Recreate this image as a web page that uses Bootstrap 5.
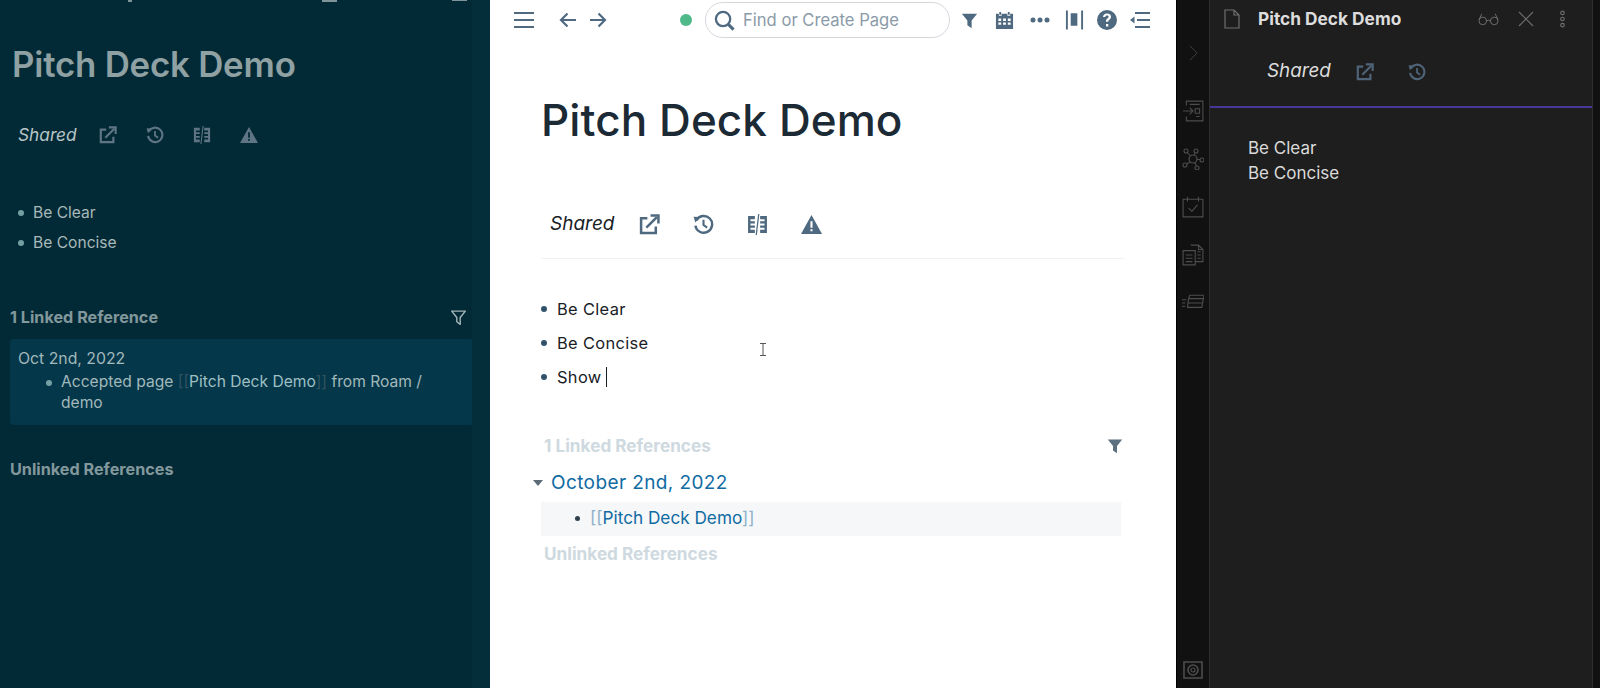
<!DOCTYPE html>
<html lang="en">
<head>
    <meta charset="UTF-8">
    <meta name="viewport" content="width=device-width, initial-scale=1.0">
    <title>Pitch Deck Demo</title>
    <link rel="stylesheet" href="https://cdn.jsdelivr.net/npm/bootstrap@5.3.0/dist/css/bootstrap.min.css">
    <style>
        html, body { height: 100%; overflow: hidden; }
        body { font-family: Inter, "Liberation Sans", sans-serif; background: #fff; }
        .shell { height: 688px; width: 1600px; }
        .ic { display: block; flex: none; }

        /* left solarized graph */
        .pane-left { width: 490px; background: #022a36; color: #a9b8b9; position: relative; padding: 0 16px 0 10px; }
        .pane-left::after { content: ""; position: absolute; top: 0; right: 0; bottom: 0; width: 18px; background: #032e3a; }
        .top-crumbs { height: 3px; margin-left: 118px; gap: 186px; }
        .top-crumbs i { display: block; height: 2px; width: 15px; background: #7f9498; }
        .top-crumbs i:first-child { width: 4px; margin-right: 4px; }
        .top-crumbs i:last-child { height: 1px; margin-left: -71px; }
        .title-left { font-size: 34.8px; font-weight: 600; letter-spacing: -.2px; color: #8fa1a3; margin: 42px 0 0 2px; line-height: 38px; }
        .shared-left { margin: 39px 0 0 8px; height: 26px; color: #b9c6c6; }
        .shared-left em { font-size: 17.3px; width: 81px; }
        .shared-left .ic { color: #5f7484; margin-right: 29px; }
        .list-left { list-style: none; margin: 50px 0 0 0; padding: 0 0 0 23px; font-size: 15.6px; line-height: 30px; color: #a9b8b9; }
        .list-left li { position: relative; }
        .list-left li::before, .ref-line::before { content: ""; position: absolute; left: -15px; top: 12px; width: 6px; height: 6px; border-radius: 50%; background: #74a0a3; }
        .head-left { font-size: 16.2px; font-weight: 700; color: #82989c; line-height: 22px; }
        .head-left.first { margin-top: 48px; padding-right: 7px; }
        .head-left.last { margin-top: 33px; }
        .ref-box { background: #04374a; border-radius: 4px; margin-top: 11px; height: 86px; padding: 9px 8px; font-size: 15.8px; line-height: 22px; color: #a2b9bb; }
        .ref-line { position: relative; margin: 2px 20px 0 43px; line-height: 20.5px; font-size: 15.6px; }
        .ref-line::before { top: 8px; }
        .ref-line b { font-weight: 400; color: #9fc0c4; }
        .ref-line s { text-decoration: none; color: #30535f; }

        /* center graph */
        .pane-main { width: 686px; background: #fff; color: #182026; }
        .tool-row { height: 40px; padding-left: 24px; color: #51687d; }
        .tool-row .ic { color: #4f6a80; }
        .dot-live { width: 12px; height: 12px; border-radius: 50%; background: #4fb98a; margin: 0 13px 0 0; }
        .find-box { width: 245px; height: 36px; border: 1px solid #d3d8dd; border-radius: 18px; color: #8a9ba8; font-size: 16.6px; padding-left: 8px; margin-right: 11px; }
        .doc { padding: 0 52px 0 51px; }
        .title-main { font-size: 44px; font-weight: 500; color: #1c2a35; line-height: 52px; margin: 54px 0 0 0; letter-spacing: .1px; }
        .shared-main { margin-top: 61px; height: 52px; padding: 0 0 17px 9px; border-bottom: 1px solid #f0f2f4; color: #182026; }
        .shared-main em { font-size: 19px; width: 89px; }
        .shared-main .ic { color: #4f6a80; margin-right: 33px; }
        .list-main { list-style: none; margin: 33px 0 0 0; padding: 0 0 0 16px; font-size: 16.4px; line-height: 34px; letter-spacing: .35px; position: relative; }
        .list-main li { position: relative; }
        .list-main li::before { content: ""; position: absolute; left: -16px; top: 14px; width: 6px; height: 6px; border-radius: 50%; background: #30536b; }
        .caret-text { border-right: 1px solid #182026; padding-right: 4px; }
        .head-main { font-size: 17.2px; font-weight: 700; color: #ced9e0; line-height: 22px; padding-left: 3px; }
        .head-main.first { margin-top: 41px; padding-right: 1px; }
        .date-row { font-size: 19px; color: #106ba3; margin: 14px 0 0 -8px; line-height: 24px; letter-spacing: .4px; }
        .date-row span.tri { width: 0; height: 0; border: 5px solid transparent; border-top: 6px solid #5c6b76; border-bottom: 0; margin-right: 8px; }
        .ref-main { background: #f6f7f8; height: 34px; margin-top: 7px; padding-left: 49px; font-size: 17.2px; line-height: 32px; color: #106ba3; position: relative; margin-right: 3px; }
        .ref-main::before { content: ""; position: absolute; left: 34px; top: 14px; width: 5px; height: 5px; border-radius: 50%; background: #30404d; }
        .ref-main s { text-decoration: none; color: #8fb0c8; }
        .head-main.last { margin-top: 7px; }

        /* dark side */
        .rail { width: 34px; background: #111112; border-left: 1px solid #000; border-right: 1px solid #2e2e2e; color: #4d4d4d; }
        .rail .tool { margin-bottom: 26px; }
        .chev { margin-top: 44px; margin-bottom: 38px; color: #3f3f3f; }
        .side { width: 382px; background: #1e1e1e; color: #dcdcdc; }
        .side-head { height: 37px; margin-bottom: 2px; padding-left: 14px; color: #6f6f6f; }
        .side-head strong { font-size: 17.3px; font-weight: 700; color: #dddddd; margin-left: 18px; width: 220px; }
        .side-shared { height: 69px; padding: 0 0 2px 57px; border-bottom: 2px solid #46379a; }
        .side-shared em { font-size: 18.8px; width: 89px; color: #dddddd; }
        .side-shared .ic { color: #4f6479; margin-right: 34px; }
        .side-text { padding: 28px 0 0 38px; font-size: 17px; line-height: 24.5px; color: #dadada; }
        .edge { width: 8px; background: #111112; border-left: 1px solid #2e2e2e; }
    </style>
</head>
<body>
    <svg width="0" height="0" class="position-absolute">
        <symbol id="i-share" viewBox="0 0 20 20"><path d="M8 4H2v14h14v-6" fill="none" stroke="currentColor" stroke-width="2.4"/><path d="M7 13 L17 3" stroke="currentColor" stroke-width="2.4" fill="none"/><path d="M11 1.500h7.500V9" fill="none" stroke="currentColor" stroke-width="2.4"/></symbol>
        <symbol id="i-history" viewBox="0 0 20 20"><path d="M3.200 6a8 8 0 1 1-.9 5" fill="none" stroke="currentColor" stroke-width="2.3"/><path d="M.6 2.500 L6.500 2.800 L2.200 8Z" fill="currentColor"/><path d="M10 5.500V10.500l3.500 2.500" fill="none" stroke="currentColor" stroke-width="2"/></symbol>
        <symbol id="i-diff" viewBox="0 0 20 20"><path fill-rule="evenodd" d="M1 2h6.500v16H1zM3.300 5v2h4.200V5zM3.300 9v2h4.200V9zM3.300 13v2h4.200v-2zM12.500 2H19v16h-6.500zM12.500 5v2h4.200V5zM12.500 9v2h4.200V9zM12.500 13v2h4.200v-2z" fill="currentColor"/><path d="M11.200 0 L8.800 20" stroke="currentColor" stroke-width="1.200"/></symbol>
        <symbol id="i-warn" viewBox="0 0 20 20"><path fill-rule="evenodd" d="M10 1 L20 19 H0Z M9 7v6h2V7z M9 14.500v2h2v-2z" fill="currentColor"/></symbol>
        <symbol id="i-menu" viewBox="0 0 20 20"><path d="M0 3h20M0 10h20M0 17h20" stroke="currentColor" stroke-width="2" fill="none"/></symbol>
        <symbol id="i-left" viewBox="0 0 20 20"><path d="M18 10H3M9.500 3.500 3 10l6.500 6.500" stroke="currentColor" stroke-width="2.200" fill="none"/></symbol>
        <symbol id="i-right" viewBox="0 0 20 20"><path d="M2 10h15M10.500 3.500 17 10l-6.500 6.500" stroke="currentColor" stroke-width="2.200" fill="none"/></symbol>
        <symbol id="i-search" viewBox="0 0 22 22"><circle cx="9.500" cy="9.500" r="7.500" fill="none" stroke="currentColor" stroke-width="2.400"/><path d="M15 15l5.500 5.500" stroke="currentColor" stroke-width="3.200"/></symbol>
        <symbol id="i-filter" viewBox="0 0 20 20"><path d="M1 2h18l-6.500 8v9l-5-3.500V10z" fill="currentColor"/></symbol>
        <symbol id="i-filter-line" viewBox="0 0 20 20"><path d="M2 2.500h16l-6 7.500v8l-4-3v-5z" fill="none" stroke="currentColor" stroke-width="1.700" stroke-linejoin="round"/></symbol>
        <symbol id="i-cal" viewBox="0 0 20 20"><path fill-rule="evenodd" d="M1 3h3v2h3V3h6v2h3V3h3v16H1zM3.500 8v2.500h3V8zm5 0v2.500h3V8zm5 0v2.500h3V8zm-10 4v2.500h3V12zm5 0v2.500h3V12zm5 0v2.500h3V12z" fill="currentColor"/><path d="M5.500 1v3M14.500 1v3" stroke="currentColor" stroke-width="2"/></symbol>
        <symbol id="i-dots" viewBox="0 0 20 20"><circle cx="3" cy="10" r="2.500" fill="currentColor"/><circle cx="10" cy="10" r="2.500" fill="currentColor"/><circle cx="17" cy="10" r="2.500" fill="currentColor"/></symbol>
        <symbol id="i-panels" viewBox="0 0 20 20"><path d="M1 0h2v20H1zM17 0h2v20h-2zM6 3h7v13H6z" fill="currentColor"/></symbol>
        <symbol id="i-help" viewBox="0 0 20 20"><path fill-rule="evenodd" d="M10 0a10 10 0 1 1 0 20a10 10 0 0 1 0-20zM9 14v2.500h2.300V14zM10 3.500c-2.300 0-3.800 1.300-4 3.500h2.300c.1-1 .7-1.500 1.700-1.500s1.600.5 1.600 1.300c0 .8-.5 1.200-1.300 1.800-1 .8-1.300 1.500-1.300 3.200h2.300c0-1 .2-1.400 1-2 1-.7 1.700-1.500 1.700-3 0-2.200-1.700-3.300-4-3.300z" fill="currentColor"/></symbol>
        <symbol id="i-outdent" viewBox="0 0 20 20"><path d="M5 3h15M7 10h13M5 17h15" stroke="currentColor" stroke-width="2.200" fill="none"/><path d="M0 10l4.500-3.500v7z" fill="currentColor"/></symbol>
        <symbol id="i-doc" viewBox="0 0 16 20"><path d="M1 1h9l5 5v13H1zM10 1v5h5" fill="none" stroke="currentColor" stroke-width="1.200"/></symbol>
        <symbol id="i-glasses" viewBox="0 0 22 14"><circle cx="5" cy="9" r="4" fill="none" stroke="currentColor" stroke-width="1"/><circle cx="17" cy="9" r="4" fill="none" stroke="currentColor" stroke-width="1"/><path d="M9 9q2-1.500 4 0M1 8 4 1.500M21 8 18 1.500" fill="none" stroke="currentColor" stroke-width="1"/></symbol>
        <symbol id="i-x" viewBox="0 0 16 16"><path d="M1 1l14 14M15 1 1 15" stroke="currentColor" stroke-width="1.100"/></symbol>
        <symbol id="i-kebab" viewBox="0 0 8 20"><circle cx="4" cy="3" r="2" fill="none" stroke="currentColor" stroke-width="1.300"/><circle cx="4" cy="10" r="2" fill="none" stroke="currentColor" stroke-width="1.300"/><circle cx="4" cy="17" r="2" fill="none" stroke="currentColor" stroke-width="1.300"/></symbol>
        <symbol id="i-chev" viewBox="0 0 10 18"><path d="M1 1l8 8-8 8" fill="none" stroke="currentColor" stroke-width="1.100"/></symbol>
        <symbol id="i-note" viewBox="0 0 20 20"><path d="M4 5V1h15v18H4v-4M1 10h9M7 7l3 3-3 3M12 8h4v4h-4zM7 4h9M13 15h3" fill="none" stroke="currentColor" stroke-width="1"/></symbol>
        <symbol id="i-graph" viewBox="0 0 22 22"><circle cx="11" cy="11" r="4" fill="none" stroke="currentColor" stroke-width="1.200"/><g fill="none" stroke="currentColor" stroke-width="1.100"><circle cx="4" cy="3" r="2"/><circle cx="14" cy="3" r="2"/><circle cx="20" cy="12" r="2"/><circle cx="15" cy="20" r="2"/><circle cx="3" cy="17" r="2"/><path d="M5.500 4.500 8.500 8M13.300 5 12 7.200M15 11.500h3M13 14.500l1.300 3.500M8 14l-3.500 2"/></g></symbol>
        <symbol id="i-check" viewBox="0 0 20 20"><path d="M1 3h18v16H1zM5 1v4M15 1v4M6 11l3 3 5-6" fill="none" stroke="currentColor" stroke-width="1"/></symbol>
        <symbol id="i-pages" viewBox="0 0 20 20"><path d="M8 1h7l4 4v11h-7M1 6h11v13H1zM3.500 10h6M3.500 13h6M3.500 16h6M14 7h3M14 10h3M14 13h3M15 1v4h4" fill="none" stroke="currentColor" stroke-width="1"/></symbol>
        <symbol id="i-cards" viewBox="0 0 20 20"><path d="M6 6 7 3h13l-2 11H5zM6 6h13M5 10h13M0 7h4M0 10h3M0 13h3" fill="none" stroke="currentColor" stroke-width="1"/></symbol>
        <symbol id="i-camera" viewBox="0 0 20 20"><path d="M1 2h18v16H1z" fill="none" stroke="currentColor" stroke-width="1.600"/><circle cx="10" cy="10" r="5" fill="none" stroke="currentColor" stroke-width="1.600"/><circle cx="10" cy="10" r="2" fill="none" stroke="currentColor" stroke-width="1.200"/></symbol>
    </svg>

    <div class="shell d-flex">
        <section class="pane-left flex-shrink-0">
            <div class="top-crumbs d-flex" aria-hidden="true"><i></i><i></i><i></i></div>
            <div class="title-left">Pitch Deck Demo</div>
            <div class="shared-left d-flex align-items-center">
                <em>Shared</em>
                <svg class="ic" width="18" height="18"><use href="#i-share"/></svg>
                <svg class="ic" width="18" height="18"><use href="#i-history"/></svg>
                <svg class="ic" width="18" height="18"><use href="#i-diff"/></svg>
                <svg class="ic" width="18" height="18"><use href="#i-warn"/></svg>
            </div>
            <ul class="list-left">
                <li>Be Clear</li>
                <li>Be Concise</li>
            </ul>
            <div class="head-left first d-flex justify-content-between align-items-center">
                <span>1 Linked Reference</span>
                <svg class="ic" width="17" height="17" style="color:#a3b4b6"><use href="#i-filter-line"/></svg>
            </div>
            <div class="ref-box">
                <div>Oct 2nd, 2022</div>
                <div class="ref-line"><span>Accepted page </span><s>[[</s><b>Pitch Deck Demo</b><s>]]</s><span> from Roam /</span><br><span>demo</span></div>
            </div>
            <div class="head-left last">Unlinked References</div>
        </section>

        <main class="pane-main flex-shrink-0">
            <div class="tool-row d-flex align-items-center">
                <svg class="ic me-4" width="20" height="20"><use href="#i-menu"/></svg>
                <svg class="ic" width="20" height="20"><use href="#i-left"/></svg>
                <svg class="ic" width="20" height="20" style="margin:0 72px 0 10px"><use href="#i-right"/></svg>
                <span class="dot-live"></span>
                <div class="find-box d-flex align-items-center gap-2">
                    <svg class="ic" width="21" height="21"><use href="#i-search"/></svg>
                    <span>Find or Create Page</span>
                </div>
                <svg class="ic" width="17" height="17" style="margin:0 17px 0 0"><use href="#i-filter"/></svg>
                <svg class="ic" width="19" height="19" style="margin:0 16px 0 0"><use href="#i-cal"/></svg>
                <svg class="ic" width="20" height="20" style="margin:0 15px 0 0"><use href="#i-dots"/></svg>
                <svg class="ic" width="19" height="20" style="margin:0 13px 0 0"><use href="#i-panels"/></svg>
                <svg class="ic" width="20" height="20" style="margin:0 13px 0 0"><use href="#i-help"/></svg>
                <svg class="ic" width="20" height="20"><use href="#i-outdent"/></svg>
            </div>
            <div class="doc">
                <div class="title-main">Pitch Deck Demo</div>
                <div class="shared-main d-flex align-items-center">
                    <em>Shared</em>
                    <svg class="ic" width="21" height="21"><use href="#i-share"/></svg>
                    <svg class="ic" width="21" height="21"><use href="#i-history"/></svg>
                    <svg class="ic" width="21" height="21"><use href="#i-diff"/></svg>
                    <svg class="ic" width="21" height="21"><use href="#i-warn"/></svg>
                </div>
                <ul class="list-main">
                    <li>Be Clear</li>
                    <li>Be Concise</li>
                    <li><span class="caret-text">Show</span></li>
                </ul>
                <div class="head-main first d-flex justify-content-between align-items-center">
                    <span>1 Linked References</span>
                    <svg class="ic" width="16" height="18" style="color:#5c7080"><use href="#i-filter"/></svg>
                </div>
                <div class="date-row d-flex align-items-center"><span class="tri"></span>October 2nd, 2022</div>
                <div class="ref-main"><s>[[</s>Pitch Deck Demo<s>]]</s></div>
                <div class="head-main last">Unlinked References</div>
            </div>
        </main>

        <nav class="rail flex-shrink-0 d-flex flex-column align-items-center">
            <svg class="ic chev" width="9" height="18"><use href="#i-chev"/></svg>
            <svg class="ic tool" width="22" height="22"><use href="#i-note"/></svg>
            <svg class="ic tool" width="22" height="22"><use href="#i-graph"/></svg>
            <svg class="ic tool" width="22" height="22"><use href="#i-check"/></svg>
            <svg class="ic tool" width="22" height="22"><use href="#i-pages"/></svg>
            <svg class="ic tool" width="22" height="22"><use href="#i-cards"/></svg>
            <svg class="ic mt-auto mb-2" width="20" height="20"><use href="#i-camera"/></svg>
        </nav>

        <aside class="side flex-shrink-0">
            <div class="side-head d-flex align-items-center">
                <svg class="ic" width="16" height="20"><use href="#i-doc"/></svg>
                <strong>Pitch Deck Demo</strong>
                <svg class="ic" width="21" height="14"><use href="#i-glasses"/></svg>
                <svg class="ic" style="margin:0 25px 0 19px" width="16" height="16"><use href="#i-x"/></svg>
                <svg class="ic" width="7" height="18"><use href="#i-kebab"/></svg>
            </div>
            <div class="side-shared d-flex align-items-center">
                <em>Shared</em>
                <svg class="ic" width="18" height="18"><use href="#i-share"/></svg>
                <svg class="ic" width="18" height="18"><use href="#i-history"/></svg>
            </div>
            <div class="side-text">
                <div>Be Clear</div>
                <div>Be Concise</div>
            </div>
        </aside>
        <div class="edge flex-shrink-0"></div>
    </div>

    <!-- text cursor over the page, not part of the flow -->
    <svg class="position-absolute" width="8" height="13" viewBox="0 0 8 13" style="left:759px;top:343px"><path d="M1 .5h6M4 .5v12M1 12.500h6" stroke="#555" fill="none"/></svg>

    <script src="https://cdn.jsdelivr.net/npm/bootstrap@5.3.0/dist/js/bootstrap.bundle.min.js"></script>
</body>
</html>
